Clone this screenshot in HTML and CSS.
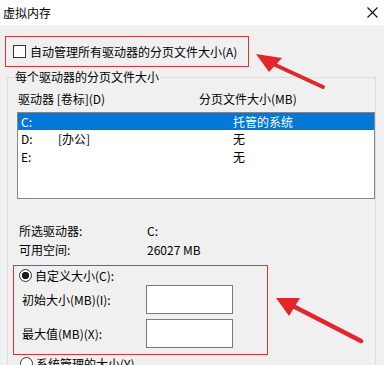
FILE: index.html
```html
<!DOCTYPE html>
<html lang="zh-CN">
<head>
  <meta charset="UTF-8" />
  <meta name="viewport" content="width=device-width, initial-scale=1.0"/>
  <title>虚拟内存</title>
  <link rel="stylesheet" href="styles.css">
</head>
<body>

  <div class="titlebar">
    <span>虚拟内存</span>
    <svg class="close" width="11" height="11" viewBox="0 0 11 11">
      <path d="M0.5 0.5 L10.5 10.5 M10.5 0.5 L0.5 10.5" stroke="#111" stroke-width="1.1" fill="none"/>
    </svg>
  </div>

  <label class="auto-box">
    <span class="checkbox"></span>
    <span>自动管理所有驱动器的分页文件大小(A)</span>
  </label>

  <fieldset class="group">
    <legend>每个驱动器的分页文件大小</legend>

    <div class="list-head">
      <span>驱动器 [卷标](D)</span>
      <span>分页文件大小(MB)</span>
    </div>

    <div class="listbox">
      <div class="row selected"><span>C:</span><span></span><span>托管的系统</span></div>
      <div class="row"><span>D:</span><span>[办公]</span><span>无</span></div>
      <div class="row"><span>E:</span><span></span><span>无</span></div>
    </div>

    <div class="info">
      <span>所选驱动器:</span><span>C:</span>
      <span>可用空间:</span><span>26027 MB</span>
    </div>

    <div class="custom-box">
      <div class="radio-row">
        <span class="radio on"></span>
        <span>自定义大小(C):</span>
      </div>
      <div class="field">
        <span>初始大小(MB)(I):</span>
        <input type="text">
      </div>
      <div class="field">
        <span>最大值(MB)(X):</span>
        <input type="text">
      </div>
    </div>

    <div class="radio-row system">
      <span class="radio"></span>
      <span>系统管理的大小(Y)</span>
    </div>
  </fieldset>

  <!-- annotation arrows -->
  <svg class="marks" width="384" height="365" viewBox="0 0 384 365">
    <line x1="271" y1="63" x2="323" y2="87" stroke="#e3262b" stroke-width="4" stroke-linecap="round"/>
    <polygon points="256,54 282,58 269,72" fill="#e3262b"/>
    <line x1="293" y1="306" x2="361" y2="341" stroke="#e3262b" stroke-width="4.5" stroke-linecap="round"/>
    <polygon points="276,298 300,298 289,316" fill="#e3262b"/>
  </svg>

</body>
</html>
```

FILE: styles.css
```css
* {
  box-sizing: border-box;
}

body {
  margin: 0;
  width: 384px;
  height: 365px;
  overflow: hidden;
  position: relative;
  background: #f0f0f0;
  color: #000;
  font: 12px/16px "Noto Sans CJK SC", "Microsoft YaHei", sans-serif;
}

.titlebar {
  height: 25px;
  background: #fff;
  display: flex;
  align-items: center;
  justify-content: space-between;
  padding: 0 6px 0 3px;
  font-size: 12px;
}

.auto-box {
  display: flex;
  align-items: center;
  gap: 4px;
  width: 244px;
  height: 31px;
  margin: 11px 0 0 5px;
  padding-left: 7px;
  border: 1px solid #d9363c;
}

.checkbox {
  width: 13px;
  height: 13px;
  border: 1px solid #333;
  background: #fff;
}

.group {
  width: 367px;
  margin: 2px 0 0 7px;
  padding: 0;
  border: 1px solid #dcdcdc;
}

.group legend {
  margin-left: 5px;
  padding: 0 2px;
  line-height: 16px;
}

.list-head {
  display: grid;
  grid-template-columns: 181px 1fr;
  margin-top: 5px;
  padding-left: 10px;
  line-height: 17px;
}

.listbox {
  width: 358px;
  height: 87px;
  margin: 5px 0 0 9px;
  background: #fff;
  border: 1px solid #828790;
}

.row {
  display: grid;
  grid-template-columns: 37px 175px 1fr;
  height: 18px;
  line-height: 17px;
  padding-left: 3px;
}

.row.selected {
  height: 17px;
  background: #0078d7;
  color: #fff;
}

.info {
  display: grid;
  grid-template-columns: 128px 1fr;
  margin-top: 22px;
  padding-left: 11px;
  line-height: 19px;
}

.custom-box {
  width: 255px;
  height: 90px;
  margin: 6px 0 0 5px;
  padding: 0 0 6px 0;
  border: 1px solid #d9363c;
}

.radio-row {
  display: flex;
  align-items: center;
  gap: 3px;
  height: 19px;
  padding-left: 5px;
}

.radio {
  width: 13px;
  height: 13px;
  border: 1px solid #333;
  border-radius: 50%;
  background: #fff;
}

.radio.on {
  background: radial-gradient(circle, #1a1a1a 3.4px, #fff 4px);
}

.field {
  display: grid;
  grid-template-columns: 124px 87px;
  align-items: center;
  height: 29px;
  padding-left: 8px;
}

.field + .field {
  margin-top: 5px;
}

.field input {
  width: 87px;
  height: 29px;
  margin: 0;
  border: 1px solid #7a7a7a;
  background: #fff;
}

.radio-row.system {
  height: 17px;
  padding-left: 12px;
}

.marks {
  position: absolute;
  top: 0;
  left: 0;
  pointer-events: none;
}
```
